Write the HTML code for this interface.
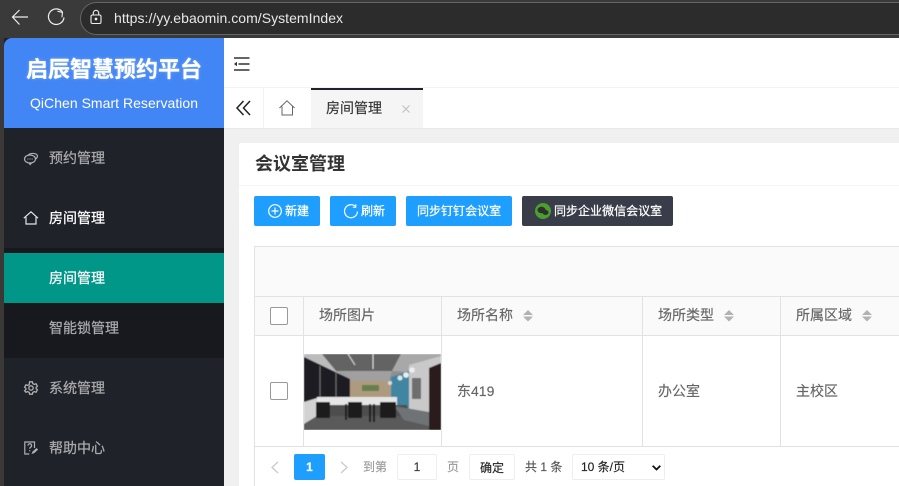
<!DOCTYPE html>
<html lang="zh"><head><meta charset="utf-8"><title>启辰智慧预约平台</title>
<style>
html,body{margin:0;padding:0;width:899px;height:486px;overflow:hidden;background:#f0f0f0}
body{position:relative;font-family:"Liberation Sans","Noto Sans CJK SC",sans-serif;font-size:14px;color:#666;-webkit-text-stroke:.15px}
.a{position:absolute;white-space:nowrap}
.t{position:absolute;white-space:nowrap;line-height:20px}
.l{position:absolute;background:#e2e2e2}
.btn{position:absolute;top:196px;height:30px;background:#1e9fff;border-radius:2px;color:#fff;font-size:12px;line-height:30px;white-space:nowrap;-webkit-text-stroke:.25px}
.menu{position:absolute;left:49px;font-size:14px;line-height:20px;color:#a9aaac;white-space:nowrap;-webkit-text-stroke:.25px}
.sort{position:absolute;width:10px;height:12px}
svg{position:absolute;overflow:visible}
</style></head><body>
<div class="a" style="left:0;top:0;width:899px;height:38px;background:#3a3a3a"></div>
<div class="a" style="left:0;top:38px;width:4px;height:448px;background:#3a3938"></div>
<svg style="left:0;top:0" width="110" height="38" fill="none" stroke="#eee" stroke-width="1.2"><path d="M28 17H13M19.500 10l-7 7 7 7.500"/><path d="M62.500 12A7.800 7.800 0 1 0 64 17.500"/><path d="M57.500 11.200l5 1.300-.6 4.800" stroke-width="1.100"/></svg>
<div class="a" style="left:80px;top:2px;width:840px;height:31px;border:1px solid #666;border-radius:17px;background:#2c2c2c"></div>
<svg style="left:0;top:0" width="110" height="38" fill="none" stroke="#eee" stroke-width="1.100"><rect x="91" y="15" width="10" height="8.500" rx="1.500"/><path d="M93.300 15v-2a2.700 2.700 0 0 1 5.400 0v2"/><circle cx="96" cy="19" r=".8" fill="#eee"/></svg>
<div class="t" style="left:114px;top:8px;color:#e8e8e8;font-size:14px;letter-spacing:.04px;-webkit-text-stroke:0">https://yy.ebaomin.com/SystemIndex</div>

<div class="a" style="left:4px;top:38px;width:220px;height:448px;background:#20222a"></div>
<div class="a" style="left:4px;top:38px;width:220px;height:90px;background:#4285f4;border-top-left-radius:8px"></div>
<div class="t" style="left:26px;top:56px;line-height:28px;font-size:22px;font-weight:700;color:#fff;text-shadow:0 0 3px rgba(255,255,255,.35)">启辰智慧预约平台</div>
<div class="t" style="left:30px;top:93px;font-size:14px;color:#fff;letter-spacing:.03px;-webkit-text-stroke:0">QiChen Smart Reservation</div>

<div class="a" style="left:4px;top:248px;width:220px;height:110px;background:#18191e"></div>
<div class="a" style="left:4px;top:253px;width:220px;height:50px;background:#009688"></div>
<div class="menu" style="top:148px">预约管理</div>
<div class="menu" style="top:208px;color:#fff">房间管理</div>
<div class="menu" style="top:268px;color:#fff">房间管理</div>
<div class="menu" style="top:318px">智能锁管理</div>
<div class="menu" style="top:378px">系统管理</div>
<div class="menu" style="top:438px">帮助中心</div>

<svg style="left:24px;top:152px" width="14" height="13" fill="none" stroke="#b0b0b2" stroke-width="1.200"><ellipse cx="6" cy="7" rx="5.500" ry="4"/><path d="M4 3.200C6 .8 13 .6 13.400 4c.1 1.300-.7 2.300-2 3"/><path d="M3.500 7h.8M5.600 7h.8M7.700 7h.8"/><path d="M5 11l1.200 1.500L7.400 11"/></svg>
<svg style="left:23px;top:211px" width="16" height="14" fill="none" stroke="#e4e4e4" stroke-width="1.200"><path d="M.8 7.200L8 .8l7 6.400M3 6v7h10V6"/></svg>
<svg style="left:24px;top:381px" width="14" height="14" viewBox="0 0 14 14" fill="none" stroke="#b0b0b2" stroke-width="1.300"><path d="M5.600.8h2.800l.4 1.800 1.500.8 1.800-.6 1.300 2.400-1.300 1.200v1.200l1.300 1.200-1.300 2.400-1.800-.6-1.500.8-.4 1.800H5.600l-.4-1.800-1.500-.8-1.800.6L.6 9.800l1.300-1.200V7.400L.6 6.200l1.300-2.400 1.800.6 1.500-.8z"/><circle cx="7" cy="7" r="2.200"/></svg>
<svg style="left:24px;top:441px" width="15" height="15" fill="none" stroke="#b0b0b2" stroke-width="1.200"><path d="M10.500 7V1H.8v12h4.500"/><path d="M4 4.600a1.800 1.800 0 1 1 2.600 1.600c-.7.400-.9.700-.9 1.500M5.700 9.200v1"/><path d="M7.500 13l1-2.400 4-3.600 1.600 1.600-4 3.600z" fill="#b0b0b2" stroke="none"/></svg>

<div class="a" style="left:224px;top:38px;width:675px;height:49px;background:#fff"></div>
<div class="a" style="left:224px;top:87px;width:675px;height:1px;background:#f2f2f2"></div>
<div class="a" style="left:224px;top:88px;width:675px;height:40px;background:#fff"></div>
<div class="a" style="left:224px;top:128px;width:675px;height:1px;background:#e8e8e8"></div>
<div class="a" style="left:263px;top:88px;width:1px;height:40px;background:#f2f2f2"></div>
<svg style="left:234px;top:57px" width="16" height="14" fill="none" stroke="#333" stroke-width="1.600"><path d="M0 1h15.500M4.500 7h11M0 13h15.500"/><path d="M0 7l3-2.300v4.600z" fill="#333" stroke="none"/></svg>
<svg style="left:236px;top:100px" width="16" height="16" fill="none" stroke="#222" stroke-width="1.500"><path d="M7.500 1L1 8l6.500 7M14 1L7.500 8l6.500 7"/></svg>
<svg style="left:279px;top:100px" width="17" height="16" fill="none" stroke="#666" stroke-width="1"><path d="M.5 8L8 .8 15.500 8M3 6.500V15h10.500V6.500"/></svg>
<div class="a" style="left:311px;top:88px;width:112px;height:40px;background:#f5f5f5"></div>
<div class="a" style="left:311px;top:88px;width:112px;height:2px;background:#20222a"></div>
<div class="t" style="left:326px;top:98px;color:#333">房间管理</div>
<svg style="left:402px;top:105px" width="8" height="8" stroke="#c2c2c2" stroke-width="1.100"><path d="M.5.500l7 7M7.500.500l-7 7"/></svg>

<div class="a" style="left:239px;top:143px;width:660px;height:343px;background:#fff;border-radius:2px 0 0 0"></div>
<div class="a" style="left:239px;top:185px;width:660px;height:1px;background:#f4f4f4"></div>
<div class="t" style="left:255px;top:154px;font-size:18px;font-weight:700;color:#333;-webkit-text-stroke:0">会议室管理</div>

<div class="btn" style="left:254px;width:66px"><span class="a" style="left:31px">新建</span><svg style="left:14px;top:8px" width="14" height="14" fill="none" stroke="#fff" stroke-width="1.200"><circle cx="7" cy="7" r="6.300"/><path d="M3.500 7h7M7 3.500v7"/></svg></div>
<div class="btn" style="left:330px;width:66px"><span class="a" style="left:31px">刷新</span><svg style="left:14px;top:8px" width="15" height="15" fill="none" stroke="#fff" stroke-width="1.200"><path d="M13.500 7.500a6.500 6.500 0 1 1-2-5"/><path d="M11.800 .3v3h-3" stroke-width="1"/></svg></div>
<div class="btn" style="left:406px;width:106px"><span class="a" style="left:11px;letter-spacing:.02px">同步钉钉会议室</span></div>
<div class="btn" style="left:522px;width:151px;background:#393d49"><span class="a" style="left:32px;letter-spacing:.02px">同步企业微信会议室</span><svg style="left:13px;top:7px" width="16" height="16"><circle cx="8" cy="8" r="8" fill="#4aa02c"/><ellipse cx="6.500" cy="7" rx="4" ry="3.200" fill="#2f2f2f"/><ellipse cx="10.500" cy="9.500" rx="3" ry="2.500" fill="#2f2f2f"/></svg></div>

<div class="a" style="left:255px;top:247px;width:644px;height:49px;background:#fafafa"></div>
<div class="a" style="left:255px;top:297px;width:644px;height:38px;background:#fafafa"></div>
<div class="l" style="left:254px;top:246px;width:645px;height:1px"></div>
<div class="l" style="left:254px;top:296px;width:645px;height:1px"></div>
<div class="l" style="left:254px;top:335px;width:645px;height:1px"></div>
<div class="l" style="left:254px;top:446px;width:645px;height:1px"></div>
<div class="l" style="left:254px;top:246px;width:1px;height:240px"></div>
<div class="l" style="left:303px;top:296px;width:1px;height:150px"></div>
<div class="l" style="left:441px;top:296px;width:1px;height:150px"></div>
<div class="l" style="left:642px;top:296px;width:1px;height:150px"></div>
<div class="l" style="left:780px;top:296px;width:1px;height:150px"></div>

<div class="a" style="left:270px;top:307px;width:16px;height:16px;border:1px solid #999;border-radius:2px;background:#fff"></div>
<div class="a" style="left:270px;top:382px;width:16px;height:16px;border:1px solid #999;border-radius:2px;background:#fff"></div>

<div class="t" style="left:319px;top:305px">场所图片</div>
<div class="t" style="left:457px;top:305px">场所名称</div>
<div class="t" style="left:658px;top:305px">场所类型</div>
<div class="t" style="left:796px;top:305px">所属区域</div>
<svg class="sort" style="left:523px;top:310px" fill="#b2b2b2"><path d="M5 0l5 5H0zM5 11.500L0 6.500h10z"/></svg>
<svg class="sort" style="left:724px;top:310px" fill="#b2b2b2"><path d="M5 0l5 5H0zM5 11.500L0 6.500h10z"/></svg>
<svg class="sort" style="left:862px;top:310px" fill="#b2b2b2"><path d="M5 0l5 5H0zM5 11.500L0 6.500h10z"/></svg>

<svg style="left:304px;top:354px;overflow:hidden" width="137" height="76" viewBox="0 0 137 76">
<defs><filter id="b" x="-5%" y="-5%" width="110%" height="110%"><feGaussianBlur stdDeviation=".5"/></filter></defs>
<g filter="url(#b)">
<rect width="137" height="76" fill="#8f8f8f"/>
<path d="M0 0h20l26 25v2L0 3z" fill="#bcbcbc"/>
<path d="M18 0h79l-9 17H32z" fill="#646464"/>
<path d="M97 0h40v8l-32 10-17-1z" fill="#a8a8a8"/>
<path d="M32 17h56l-3 10H46z" fill="#a0a0a0"/>
<path d="M0 3l46 22v24H0z" fill="#1c1c20"/>
<path d="M32 18v26M16 12v34" stroke="#666" stroke-width="1.300" fill="none"/>
<rect x="46" y="27" width="41" height="21" fill="#ad9a7f"/>
<rect x="58" y="31" width="17" height="6" fill="#66804e"/>
<path d="M87 23l18-6v43l-18-7z" fill="#3f86a3"/>
<path d="M105 11l32-9v74h-32z" fill="#c9c9ca"/>
<path d="M125 14l12-5v67h-12z" fill="#2a1c1e"/>
<rect x="108" y="24" width="9" height="21" fill="#6e6e6e"/>
<path d="M0 48l13-4v18L0 70z" fill="#d2d2d2"/>
<path d="M13 43h80v8H13z" fill="#e6e6e6"/>
<path d="M0 70l13-8h90l22 8v6H0z" fill="#5a5a5a"/>
<path d="M13 51h90l2 11H13z" fill="#4d4d4d"/>
<path d="M90 52l35 6v14l-25-6z" fill="#6f7376"/>
<path d="M12 48h14v16H12zM44 48h14v16H44zM76 48h16v16H76z" fill="#1d1d1d"/>
<path d="M41 50h2v16h-2zM65 50h2v18h-2zM69 50h2v18h-2z" fill="#1d1d1d"/>
<circle cx="86" cy="29" r="2" fill="#ddd"/><circle cx="96" cy="24" r="2.500" fill="#e4e4e4"/><circle cx="102" cy="21" r="2.800" fill="#eee"/><circle cx="108" cy="16" r="2.800" fill="#eee"/>
<path d="M44 0l7 11M69 0v15" stroke="#ddd" stroke-width="1"/>
</g></svg>

<div class="t" style="left:457px;top:381px">东419</div>
<div class="t" style="left:658px;top:381px">办公室</div>
<div class="t" style="left:796px;top:381px">主校区</div>

<svg style="left:270px;top:461px" width="10" height="13" fill="none" stroke="#c9c9c9" stroke-width="1.300"><path d="M8 .8L2 6.500 8 12"/></svg>
<svg style="left:339px;top:461px" width="10" height="13" fill="none" stroke="#c9c9c9" stroke-width="1.300"><path d="M2 .8l6 5.700L2 12"/></svg>
<div class="a" style="left:294px;top:454px;width:31px;height:26px;background:#1e9fff;border-radius:2px;color:#fff;font-size:12px;font-weight:700;line-height:26px;text-align:center">1</div>
<div class="t" style="left:363px;top:457px;font-size:12px;color:#999">到第</div>
<div class="a" style="left:397px;top:454px;width:38px;height:24px;border:1px solid #eee;border-radius:2px;font-size:12px;line-height:24px;text-align:center;color:#333">1</div>
<div class="t" style="left:447px;top:457px;font-size:12px;color:#999">页</div>
<div class="a" style="left:469px;top:454px;width:44px;height:24px;border:1px solid #eee;border-radius:2px;font-size:12px;line-height:26px;text-align:center;color:#222">确定</div>
<div class="t" style="left:525px;top:457px;font-size:12px;color:#555">共 1 条</div>
<div class="a" style="left:572px;top:454px;width:91px;height:24px;border:1px solid #eee;border-radius:2px;background:#fff;font-size:12px;line-height:24px;color:#222"><span class="a" style="left:8px">10 条/页</span><svg style="left:79px;top:10px" width="9" height="6" fill="none" stroke="#111" stroke-width="1.800"><path d="M.7.700L4.500 4.500 8.300.700"/></svg></div>
</body></html>
